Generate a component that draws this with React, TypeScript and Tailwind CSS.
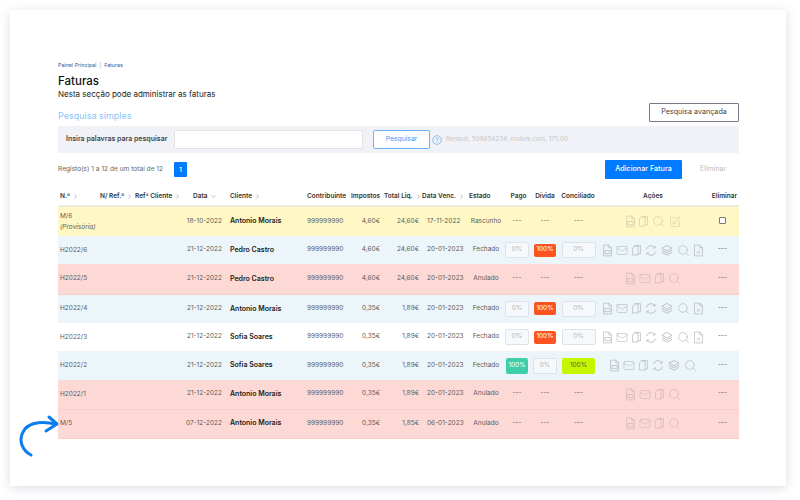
import { ChevronDown, ChevronRight, Mail, Search, SquarePen } from 'lucide-react';

type Kind = 'draft' | 'open' | 'void' | 'plain';

type Invoice = {
  num: string;
  note?: string;
  date: string;
  client: string;
  tax: string;
  total: string;
  due: string;
  status: string;
  kind: Kind;
  height: string;
  pills?: 'debt' | 'paid';
  icons: string[];
};

const full = ['pdf', 'mail', 'copy', 'sync', 'layers', 'search', 'xml'];

const invoices: Invoice[] = [
  { num: 'M/6', note: '(Provisória)', date: '18-10-2022', client: 'Antonio Morais', tax: '4,60€', total: '24,60€', due: '17-11-2022', status: 'Rascunho', kind: 'draft', height: 'h-[30px]', icons: ['pdf', 'copy', 'search', 'edit'] },
  { num: 'H2022/6', date: '21-12-2022', client: 'Pedro Castro', tax: '4,60€', total: '24,60€', due: '20-01-2023', status: 'Fechado', kind: 'open', height: 'h-[28px]', pills: 'debt', icons: full },
  { num: 'H2022/5', date: '21-12-2022', client: 'Pedro Castro', tax: '4,60€', total: '24,60€', due: '20-01-2023', status: 'Anulado', kind: 'void', height: 'h-[30px]', icons: ['pdf', 'mail', 'copy', 'search'] },
  { num: 'H2022/4', date: '21-12-2022', client: 'Antonio Morais', tax: '0,35€', total: '1,89€', due: '20-01-2023', status: 'Fechado', kind: 'open', height: 'h-[29px]', pills: 'debt', icons: full },
  { num: 'H2022/3', date: '21-12-2022', client: 'Sofia Soares', tax: '0,35€', total: '1,89€', due: '20-01-2023', status: 'Fechado', kind: 'plain', height: 'h-[28px]', pills: 'debt', icons: full },
  { num: 'H2022/2', date: '21-12-2022', client: 'Sofia Soares', tax: '0,35€', total: '1,89€', due: '20-01-2023', status: 'Fechado', kind: 'open', height: 'h-[29px]', pills: 'paid', icons: ['pdf', 'mail', 'copy', 'sync', 'layers', 'search'] },
  { num: 'H2022/1', date: '21-12-2022', client: 'Antonio Morais', tax: '0,35€', total: '1,89€', due: '20-01-2023', status: 'Anulado', kind: 'void', height: 'h-[29px]', icons: ['pdf', 'mail', 'copy', 'search'] },
  { num: 'M/5', date: '07-12-2022', client: 'Antonio Morais', tax: '0,35€', total: '1,85€', due: '06-01-2023', status: 'Anulado', kind: 'void', height: 'h-[29px]', icons: ['pdf', 'mail', 'copy', 'search'] },
];

function rowColor(kind: Kind) {
  if (kind === 'draft') return 'bg-[#fff8c5]';
  if (kind === 'open') return 'bg-[#ecf5f9]';
  if (kind === 'void') return 'bg-[#fdd9d5] border-b border-[#fbcdc6]';
  return 'bg-white';
}

function iconColor(kind: Kind) {
  if (kind === 'draft') return 'text-[#d0cca6]';
  if (kind === 'void') return 'text-[#d4b6b1]';
  return 'text-[#b4b9bc]';
}

function DocIcon({ mark }: { mark: 'pdf' | 'xml' }) {
  return (
    <svg viewBox="0 0 10 13" className="h-[13px] w-[9px]" fill="none" stroke="currentColor" strokeWidth="0.8">
      <path d="M.5.5h6l3 3v9h-9z" />
      <path d="M6.5.5v3h3" />
      {mark === 'pdf' ? <path d="M2 6.5h6v3.5H2z" /> : <path d="M3.5 7l3 3M6.5 7l-3 3" />}
    </svg>
  );
}

function CopyIcon() {
  return (
    <svg viewBox="0 0 11 13" className="h-[13px] w-[9px]" fill="none" stroke="currentColor" strokeWidth="0.9">
      <path d="M.5 3.5l2.5-2.5h4.5v11h-7z" />
      <path d="M3.5 1V.5h7v10H7.5" />
    </svg>
  );
}

function SyncIcon() {
  return (
    <svg viewBox="0 0 13 13" className="h-[13px] w-[12px]" fill="none" stroke="currentColor" strokeWidth="0.9">
      <path d="M1.5 5.2A5 5 0 0 1 10.4 3.3" />
      <path d="M11.5 7.8A5 5 0 0 1 2.6 9.7" />
      <path d="M10.9 1.6v2.2H8.7M2.1 11.4V9.2h2.2" />
    </svg>
  );
}

function LayersIcon() {
  return (
    <svg viewBox="0 0 13 13" className="h-[13px] w-[12px]" fill="none" stroke="currentColor" strokeWidth="0.9" strokeLinejoin="round">
      <path d="M6.5 1L12 4 6.5 7 1 4z" />
      <path d="M1 6.2l5.5 3 5.5-3" />
      <path d="M1 8.6l5.5 3 5.5-3" />
    </svg>
  );
}

function ActionIcon({ name }: { name: string }) {
  if (name === 'pdf') return <DocIcon mark="pdf" />;
  if (name === 'xml') return <DocIcon mark="xml" />;
  if (name === 'mail') return <Mail className="h-[13px] w-[12px]" strokeWidth={1.2} />;
  if (name === 'copy') return <CopyIcon />;
  if (name === 'sync') return <SyncIcon />;
  if (name === 'layers') return <LayersIcon />;
  if (name === 'search') return <Search className="h-[13px] w-[13px]" strokeWidth={1.2} />;
  return <SquarePen className="h-[12px] w-[12px]" strokeWidth={1.3} />;
}

function Pill({ label, className }: { label: string; className: string }) {
  return <span className={`mx-auto flex items-center justify-center rounded-[2px] text-[6.5px] ${className}`}>{label}</span>;
}

const emptyPill = 'h-[16px] border border-[#dfe3e8] bg-[#f5f9fb] text-[#b5b5b5]';

function Head({ label, sort, className = '' }: { label: string; sort?: 'right' | 'down'; className?: string }) {
  return (
    <th className={`whitespace-nowrap pb-[3px] text-[6.5px] font-semibold text-[#333] ${className}`}>
      {label}
      {sort === 'right' && <ChevronRight className="ml-[2px] inline h-[7px] w-[7px] text-[#888]" />}
      {sort === 'down' && <ChevronDown className="ml-[2px] inline h-[7px] w-[7px] text-[#888]" />}
    </th>
  );
}

export default function App() {
  return (
    <div className="h-[500px] w-[800px] overflow-hidden bg-white pb-[14px] pl-[10px] pr-[14px] pt-[10px] font-['Inter',sans-serif]">
      <div className="relative h-[476px] w-[776px] bg-white pl-[48px] pr-[47px] pt-[52px] shadow-[0_2px_10px_rgba(90,100,130,0.22)]">
        <div className="flex h-[7px] items-center gap-[3px] text-[5.3px] text-[#2b5ea8]">
          <span>Painel Principal</span>
          <span className="text-[#999]">|</span>
          <span>Faturas</span>
        </div>
        <h1 className="mt-[5px] text-[11.5px] font-medium leading-[14px] text-[#111]">Faturas</h1>
        <p className="text-[8px] leading-[12px] text-[#222]">Nesta secção pode administrar as faturas</p>

        <div className="mt-[3px] flex h-[19px] items-end justify-between">
          <span className="text-[9px] leading-[12px] text-[#8cc4fb]">Pesquisa simples</span>
          <button className="flex h-[19px] w-[90px] items-center justify-center rounded-[1px] border border-[#777b88] text-[7.2px] text-[#444]">
            Pesquisa avançada
          </button>
        </div>

        <div className="mt-[4px] flex h-[27px] items-center bg-[#f1f2f7] pl-[8px]">
          <span className="w-[108px] whitespace-nowrap text-[7px] font-semibold text-[#444]">Insira palavras para pesquisar</span>
          <div className="h-[19px] w-[189px] rounded-[1px] border border-[#e2e2e2] bg-white" />
          <button className="ml-[10px] flex h-[19px] w-[57px] items-center justify-center rounded-[2px] border border-[#6db3fb] bg-white text-[6.8px] text-[#3d97f5]">
            Pesquisar
          </button>
          <svg viewBox="0 0 12 12" className="ml-[2px] h-[10px] w-[10px]" fill="none" stroke="#7db5ea" strokeWidth="1">
            <circle cx="6" cy="6" r="5.2" />
            <path d="M4.5 4.7a1.5 1.5 0 1 1 2.2 1.4c-.5.3-.7.6-.7 1.1M6 8.4v.8" />
          </svg>
          <span className="ml-[4px] text-[6.3px] text-[#c6c6c6]">Renault, 508654234, moloni.com, 175.00</span>
        </div>

        <div className="mt-[7px] flex h-[19px] items-center">
          <span className="w-[116px] whitespace-nowrap text-[6.6px] text-[#666]">Registo(s) 1 a 12 de um total de 12</span>
          <span className="flex h-[15px] w-[13px] items-center justify-center rounded-[1px] bg-[#007bff] text-[6px] font-semibold text-white">1</span>
          <button className="ml-auto flex h-[19px] w-[77px] items-center justify-center rounded-[1px] bg-[#007bff] text-[7.2px] font-medium text-white">
            Adicionar Fatura
          </button>
          <span className="ml-[18px] mr-[12px] w-[27px] whitespace-nowrap text-[7px] text-[#bbb]">Eliminar</span>
        </div>

        <table className="mt-[13px] w-[681px] table-fixed border-collapse">
          <colgroup>
            <col className="w-[42px]" />
            <col className="w-[34px]" />
            <col className="w-[50px]" />
            <col className="w-[43px]" />
            <col className="w-[78px]" />
            <col className="w-[45px]" />
            <col className="w-[33px]" />
            <col className="w-[38px]" />
            <col className="w-[46px]" />
            <col className="w-[38px]" />
            <col className="w-[27px]" />
            <col className="w-[26px]" />
            <col className="w-[40px]" />
            <col className="w-[110px]" />
            <col className="w-[31px]" />
          </colgroup>
          <thead>
            <tr className="h-[14px] border-b-2 border-[#efeadb]">
              <Head label="N.º" sort="right" className="pl-[2px] text-left" />
              <Head label="N/ Ref.º" sort="right" className="text-left" />
              <Head label="Refª Cliente" sort="right" className="pl-[1px] text-left" />
              <Head label="Data" sort="down" className="pl-[9px] text-left" />
              <Head label="Cliente" sort="right" className="pl-[3px] text-left" />
              <Head label="Contribuinte" className="pl-[2px] text-left" />
              <Head label="Impostos" className="pl-[1px] text-left" />
              <Head label="Total Liq." sort="right" className="pl-[1px] text-left" />
              <Head label="Data Venc." sort="right" className="pl-[1px] text-left" />
              <Head label="Estado" className="pl-[2px] text-left" />
              <Head label="Pago" className="text-center" />
              <Head label="Dívida" className="text-center" />
              <Head label="Conciliado" className="text-center" />
              <Head label="Ações" className="text-center" />
              <Head label="Eliminar" className="pr-[2px] text-right" />
            </tr>
          </thead>
          <tbody className="text-[6.5px] text-[#5c5c5c]">
            {invoices.map((inv) => (
              <tr key={inv.num} className={`${inv.height} ${rowColor(inv.kind)}`}>
                <td colSpan={2} className="pl-[2px] leading-[11px]">
                  {inv.num}
                  {inv.note && <div className="italic">{inv.note}</div>}
                </td>
                <td />
                <td className="whitespace-nowrap pr-[5px] text-right">{inv.date}</td>
                <td className="whitespace-nowrap pl-[3px] text-[7px] font-semibold text-[#222]">{inv.client}</td>
                <td className="pl-[2px]">999999990</td>
                <td className="pr-[3px] text-right">{inv.tax}</td>
                <td className="pr-[2px] text-right">{inv.total}</td>
                <td className="pl-[6px]">{inv.due}</td>
                <td className="text-center">{inv.status}</td>
                <td className="pr-[3px] text-center">
                  {inv.pills === 'debt' && <Pill label="0%" className={`w-[24px] ${emptyPill}`} />}
                  {inv.pills === 'paid' && <Pill label="100%" className="h-[16px] w-[22px] bg-[#3fcfa8] text-white" />}
                  {!inv.pills && '---'}
                </td>
                <td className="text-center">
                  {inv.pills === 'debt' && <Pill label="100%" className="h-[13px] w-[22px] bg-[#fb5420] text-white" />}
                  {inv.pills === 'paid' && <Pill label="0%" className={`w-[24px] ${emptyPill}`} />}
                  {!inv.pills && '---'}
                </td>
                <td className="pl-[1px] text-center">
                  {inv.pills === 'debt' && <Pill label="0%" className={`w-[34px] ${emptyPill}`} />}
                  {inv.pills === 'paid' && <Pill label="100%" className="h-[16px] w-[33px] bg-[#c6f500] text-[#555]" />}
                  {!inv.pills && '---'}
                </td>
                <td>
                  <div className={`flex items-center justify-center gap-[4px] ${iconColor(inv.kind)}`}>
                    {inv.icons.map((name) => (
                      <ActionIcon key={name} name={name} />
                    ))}
                  </div>
                </td>
                <td className="pr-[12px] text-right">
                  {inv.kind === 'draft' ? (
                    <input type="checkbox" className="mr-[1px] h-[7px] w-[7px] appearance-none rounded-[1px] border border-[#777] bg-white align-middle" />
                  ) : (
                    '---'
                  )}
                </td>
              </tr>
            ))}
          </tbody>
        </table>

        <svg viewBox="0 0 42 44" className="absolute left-[8px] top-[404px] h-[44px] w-[42px]" fill="none" stroke="#0a7cf0" strokeWidth="3" strokeLinecap="round" strokeLinejoin="round">
          <path d="M13 41C5 37 0 27 5 18C9 10 20 6 38 10" />
          <path d="M31 3l8 7-11 7" />
        </svg>
      </div>
    </div>
  );
}
